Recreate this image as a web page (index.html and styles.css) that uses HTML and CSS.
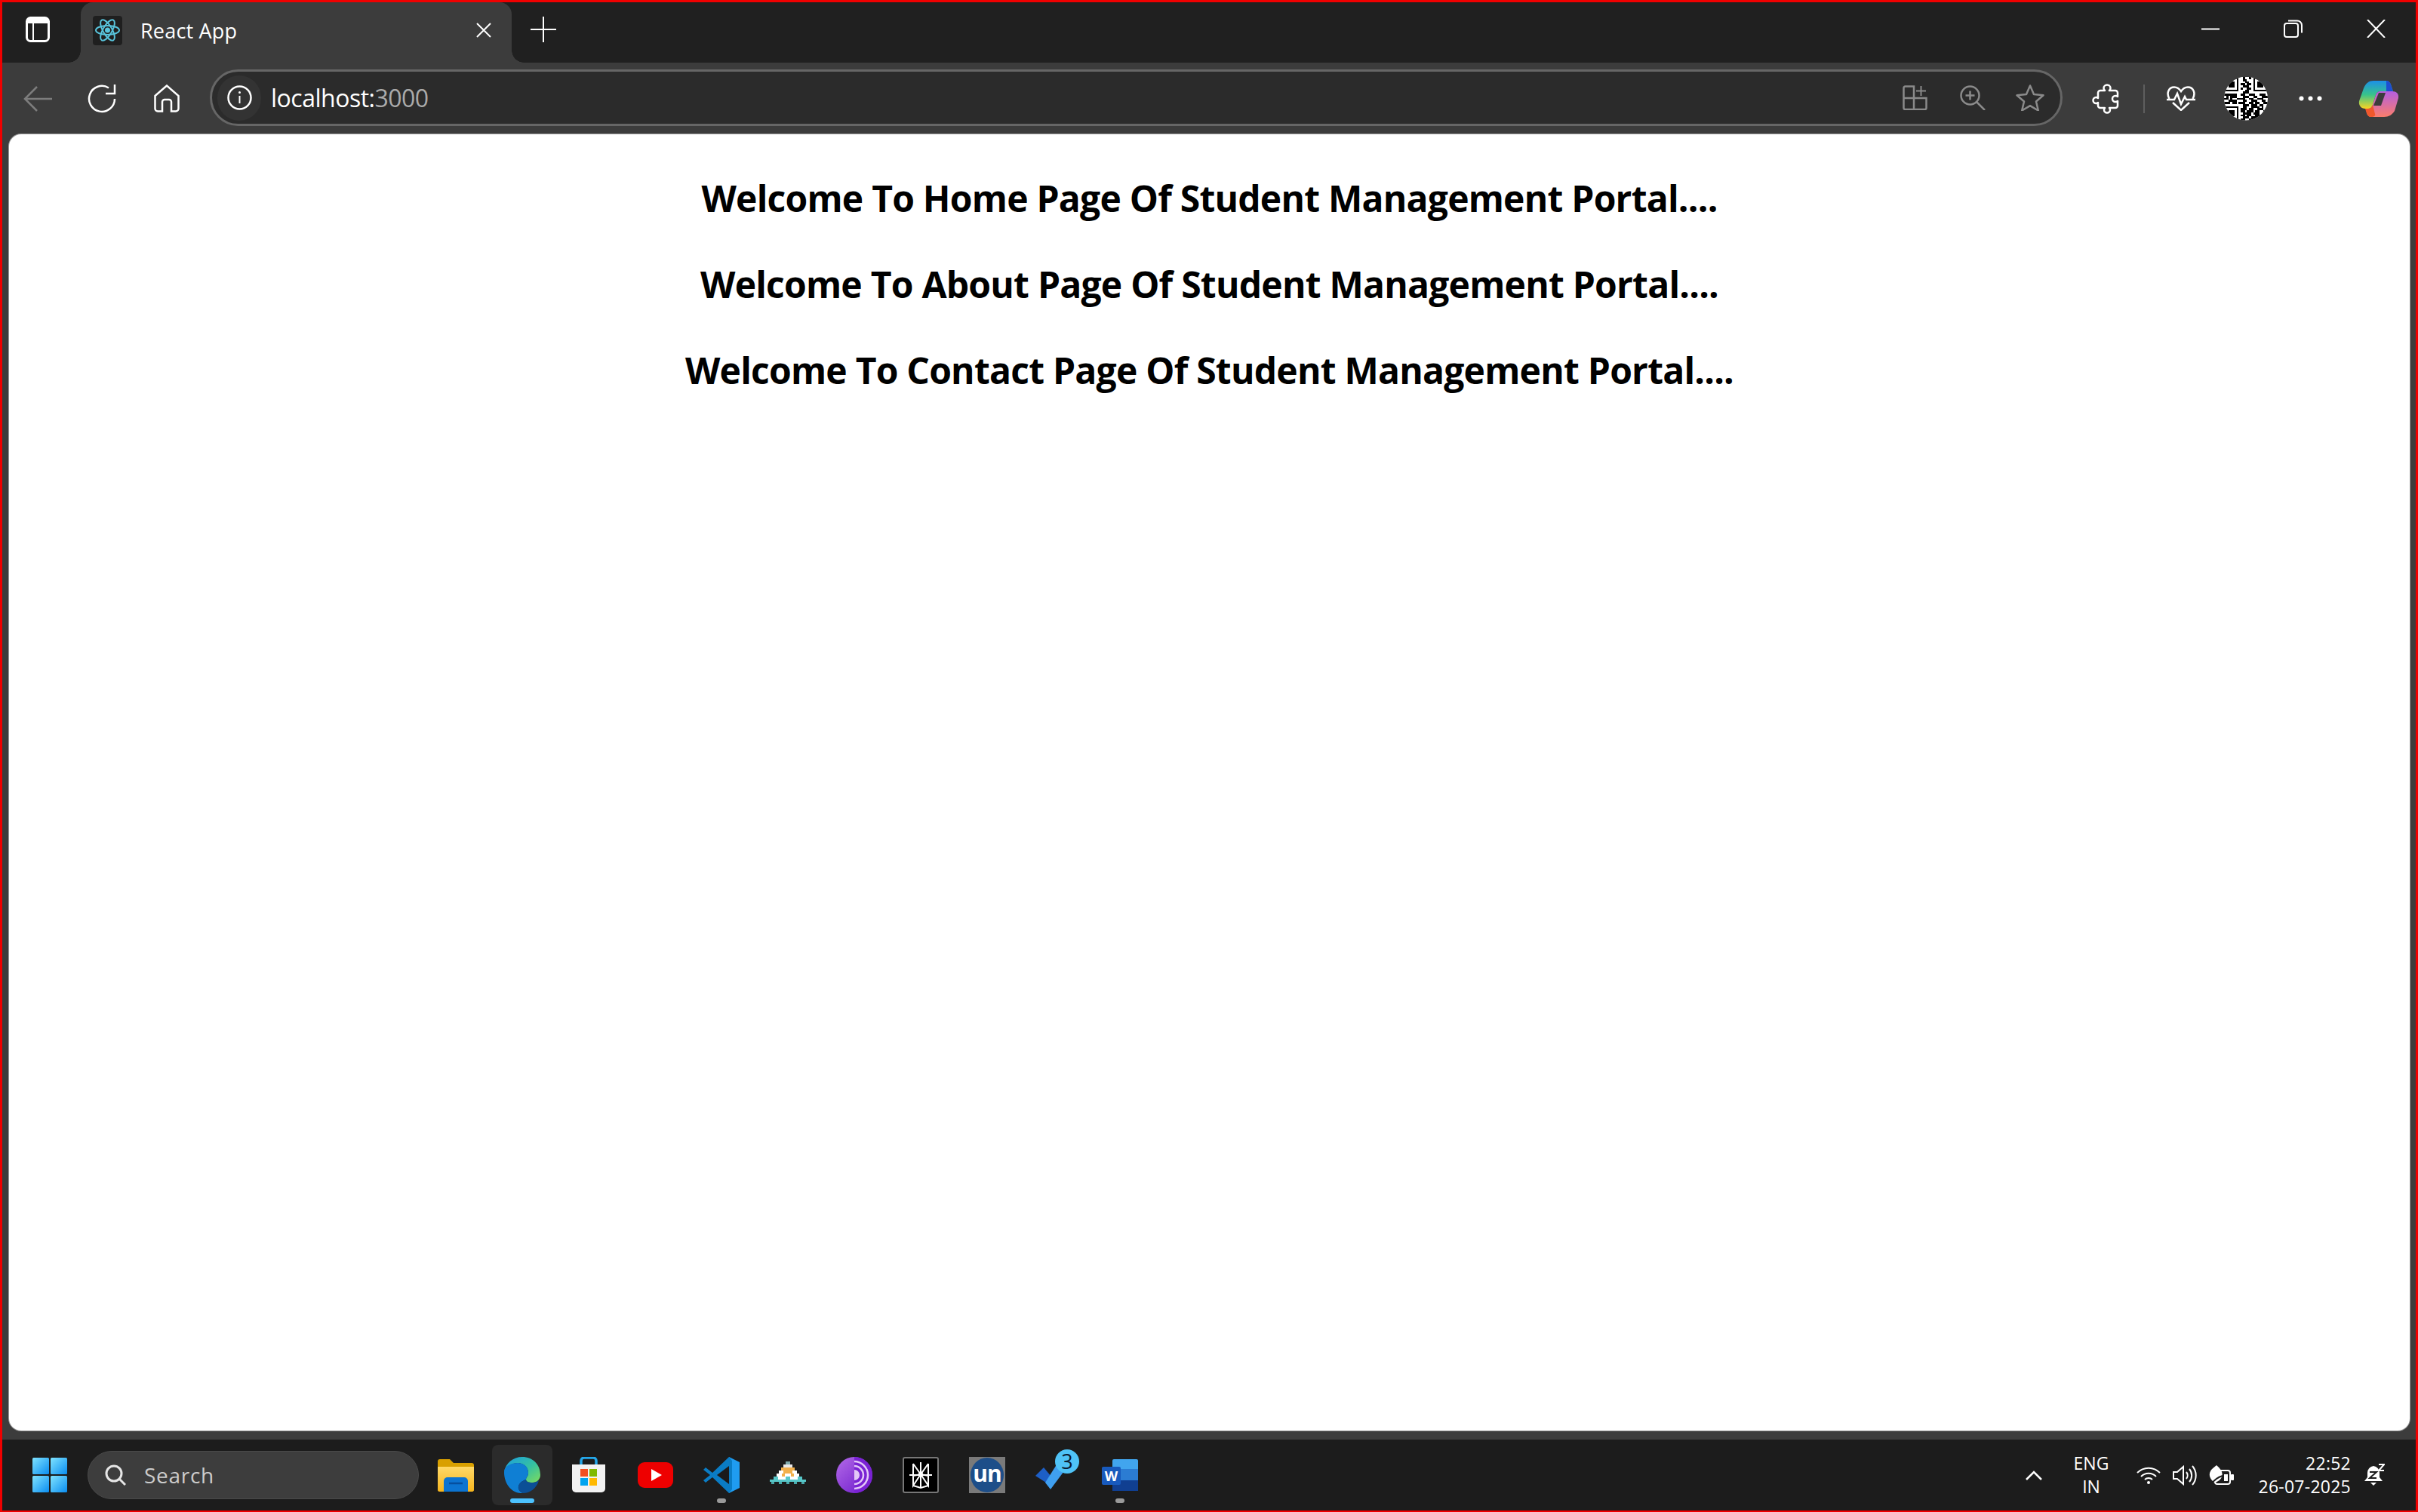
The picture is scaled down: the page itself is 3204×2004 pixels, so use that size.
FILE: index.html
```html
<!DOCTYPE html>
<html lang="en">
<head>
<meta charset="utf-8">
<title>React App</title>
<link rel="stylesheet" href="styles.css">
</head>
<body>
<svg class="defs" width="0" height="0">
  <defs>
    <linearGradient id="winG" x1="0" y1="0" x2="1" y2="1"><stop offset="0" stop-color="#7fe3ff"/><stop offset="1" stop-color="#0a8df0"/></linearGradient>
    <linearGradient id="folderG" x1="0" y1="0" x2="0" y2="1"><stop offset="0" stop-color="#ffd968"/><stop offset="1" stop-color="#f6b51e"/></linearGradient>
    <linearGradient id="edgeG" x1="0" y1="0" x2="1" y2="1"><stop offset="0" stop-color="#1b9de2"/><stop offset=".55" stop-color="#35c1a0"/><stop offset="1" stop-color="#7fdc5c"/></linearGradient>
    <linearGradient id="torG" x1="0" y1="0" x2="1" y2="1"><stop offset="0" stop-color="#b36ae8"/><stop offset="1" stop-color="#6a17c9"/></linearGradient>
    <linearGradient id="copA" x1="0" y1="0" x2="0" y2="1"><stop offset="0" stop-color="#1c8fe8"/><stop offset=".5" stop-color="#38c48a"/><stop offset="1" stop-color="#f9d423"/></linearGradient>
    <linearGradient id="copB" x1="0" y1="0" x2="0" y2="1"><stop offset="0" stop-color="#b45fe0"/><stop offset="1" stop-color="#fb7d6c"/></linearGradient>
  </defs>
</svg>

<header class="strip">
  <svg class="ic side" width="32" height="34" viewBox="0 0 32 34"><rect x="1.500" y="1.500" width="29" height="31" rx="5" fill="none" stroke="#fff" stroke-width="3"/><path d="M1.500 9h29v-2.500a5 5 0 0 0-5-5h-19a5 5 0 0 0-5 5z" fill="#fff"/><path d="M10 9v23" stroke="#fff" stroke-width="2"/></svg>
  <div class="tab">
    <div class="favicon">
      <svg width="33" height="30" viewBox="0 0 33 30" fill="none" stroke="#58c4dc" stroke-width="2"><ellipse cx="16.500" cy="15" rx="15.500" ry="6"/><ellipse cx="16.500" cy="15" rx="15.500" ry="6" transform="rotate(60 16.500 15)"/><ellipse cx="16.500" cy="15" rx="15.500" ry="6" transform="rotate(120 16.500 15)"/><circle cx="16.500" cy="15" r="3.500" fill="#58c4dc" stroke="none"/></svg>
    </div>
    <span class="tab-title">React App</span>
    <svg class="tab-close" width="20" height="20" viewBox="0 0 20 20"><path d="M1 1l18 18M19 1L1 19" stroke="#fff" stroke-width="2"/></svg>
  </div>
  <svg class="ic plus" width="34" height="34" viewBox="0 0 34 34"><path d="M17 0v34M0 17h34" stroke="#fff" stroke-width="2"/></svg>
  <div class="win-controls">
    <svg width="24" height="3" viewBox="0 0 24 3"><path d="M0 1.500h24" stroke="#fff" stroke-width="2"/></svg>
    <svg width="25" height="24" viewBox="0 0 25 24" fill="none" stroke="#fff" stroke-width="2"><rect x="1" y="5" width="18" height="18" rx="3"/><path d="M6 1.500h12a6 6 0 0 1 6 6v10"/></svg>
    <svg width="25" height="24" viewBox="0 0 25 24"><path d="M1 0l23 24M24 0L1 24" stroke="#fff" stroke-width="2"/></svg>
  </div>
</header>

<nav class="toolbar">
  <svg class="back" width="38" height="34" viewBox="0 0 38 34" fill="none" stroke="#7d7d7d" stroke-width="2.500"><path d="M38 17H2M18 1L2 17l16 16"/></svg>
  <svg class="reload" width="38" height="40" viewBox="0 0 38 40" fill="none" stroke="#fff" stroke-width="2.500"><path d="M36 20a17 17 0 1 1-8-14.500"/><path d="M36 1v12H24"/></svg>
  <svg class="home" width="34" height="37" viewBox="0 0 34 37" fill="none" stroke="#fff" stroke-width="2.500"><path d="M1.500 15L17 1.500 32.500 15v17a3.500 3.500 0 0 1-3.500 3.500H23V23a3 3 0 0 0-3-3h-6a3 3 0 0 0-3 3v12.500H5A3.500 3.500 0 0 1 1.500 32z"/></svg>
  <div class="address">
    <div class="info">
      <svg width="33" height="33" viewBox="0 0 33 33" fill="none" stroke="#fff" stroke-width="2.500"><circle cx="16.500" cy="16.500" r="15"/><path d="M16.500 14v10" stroke-width="2"/><circle cx="16.500" cy="9.500" r="1.500" fill="#fff" stroke="none"/></svg>
    </div>
    <div class="url">localhost:<span class="url-port">3000</span></div>
    <svg class="addr-ic" width="33" height="33" viewBox="0 0 33 33" fill="none" stroke="#8a8a8a" stroke-width="2.500"><path d="M1.500 17h30v13a2 2 0 0 1-2 2h-26a2 2 0 0 1-2-2zM1.500 17V3.500a2 2 0 0 1 2-2h11.500V32"/><path d="M24.500 1v13M18 7.500h13" stroke-width="2"/></svg>
    <svg class="addr-ic zoom-ic" width="34" height="33" viewBox="0 0 34 33" fill="none" stroke="#8a8a8a" stroke-width="2.500"><circle cx="13.500" cy="13.500" r="12"/><path d="M22 22l11 11M13.500 7.500v12M7.500 13.500h12"/></svg>
    <svg class="addr-ic star-ic" width="38" height="35" viewBox="0 0 38 35" fill="none" stroke="#8a8a8a" stroke-width="2.500"><path d="M19 1.500l5 11.500 12.500 1.200-9.500 8.300 2.800 12-10.800-6.400-10.800 6.400 2.800-12-9.500-8.300L14 13z" stroke-linejoin="round"/></svg>
  </div>
  <svg class="puzzle" width="35" height="37" viewBox="0 0 35 37" fill="none" stroke="#fff" stroke-width="2.500" stroke-linejoin="round"><path d="M6 11a3 3 0 0 1 3-3h6c-1-1-1.500-2-1.500-3a4.500 4.500 0 0 1 9 0c0 1-.5 2-1.500 3h8a3 3 0 0 1 3 3v5c-1-1-2-1-3-1a4 4 0 0 0 0 8c1 0 2 0 3-1v6a3 3 0 0 1-3 3h-8c.5.700 1 1.500 1 2.500a4 4 0 0 1-8 0c0-1 .5-1.800 1-2.500H9a3 3 0 0 1-3-3v-4c-1 .8-1.500 1-2.500 1a4 4 0 0 1 0-8c1 0 1.500.2 2.500 1z"/></svg>
  <div class="divider"></div>
  <svg class="heart" width="38" height="33" viewBox="0 0 38 33" fill="none" stroke="#fff" stroke-width="2.500"><path d="M3.500 17C-1 9 3 1.500 10 1.500c4 0 7 2.500 9 5.500 2-3 5-5.500 9-5.500 7 0 11 7.500 6.500 15.500"/><path d="M0 18h10l4-8 5 14 5-10 2 4h12"/><path d="M8 22l11 10 11-10"/></svg>
  <svg class="qr" width="58" height="58" viewBox="0 0 21 21" shape-rendering="crispEdges"><rect width="21" height="21" fill="#fff"/><path stroke="#000" d="M0 .5h7M14 .5h7M0 1.500h1m5 0h1M14 1.500h1m5 0h1M0 2.500h1m1 0h3m1 0h1M14 2.500h1m1 0h3m1 0h1M0 3.500h1m1 0h3m1 0h1M14 3.500h1m1 0h3m1 0h1M0 4.500h1m1 0h3m1 0h1M14 4.500h1m1 0h3m1 0h1M0 5.500h1m5 0h1M14 5.500h1m5 0h1M0 6.500h7M14 6.500h7M0 14.500h7M0 15.500h1m5 0h1M0 16.500h1m1 0h3m1 0h1M0 17.500h1m1 0h3m1 0h1M0 18.500h1m1 0h3m1 0h1M0 19.500h1m5 0h1M0 20.500h7M9 .5h1M12 .5h1M9 1.500h2M10 2.500h2M8 3.500h2M11 3.500h2M9 4.500h3M8 5.500h1M11 5.500h2M10 6.500h2M9 7.500h3M0 8.500h6M8 8.500h2M12 8.500h3M17 8.500h3M1 9.500h1M3 9.500h3M9 9.500h3M14 9.500h2M18 9.500h3M0 10.500h2M3 10.500h1M6 10.500h4M12 10.500h2M16 10.500h3M2 11.500h4M9 11.500h2M13 11.500h3M18 11.500h2M0 12.500h3M4 12.500h2M7 12.500h3M12 12.500h2M15 12.500h2M19 12.500h2M9 13.500h3M13 13.500h3M17 13.500h2M9 14.500h2M13 14.500h4M18 14.500h1M8 15.500h3M12 15.500h2M16 15.500h3M8 16.500h2M11 16.500h3M15 16.500h2M19 16.500h2M9 17.500h4M14 17.500h3M8 18.500h2M11 18.500h2M15 18.500h3M9 19.500h3M13 19.500h4M8 20.500h2M12 20.500h3M16 20.500h2"/></svg>
  <svg class="dots" width="31" height="7" viewBox="0 0 31 7" fill="#fff"><circle cx="3.500" cy="3.500" r="3"/><circle cx="15.500" cy="3.500" r="3"/><circle cx="27.500" cy="3.500" r="3"/></svg>
  <svg class="copilot" width="54" height="50" viewBox="0 0 54 50"><path d="M20 1h17c3 0 5 2 6 5l3 9H30c-4 0-6 2-7 5l-4 13c-1 3-3 5-6 5H9c-5 0-9-4-8-10l6-17C10 4 14 1 20 1z" fill="url(#copA)"/><path d="M37 1c3 0 5 2 6 5l3 9H37z" fill="#1d4fd1"/><path d="M34 49H17c-3 0-5-2-6-5l-1-6h3c3 0 5-2 6-5l4-13c1-3 3-5 7-5h15c5 0 9 3 8 9l-5 17c-3 5-8 8-14 8z" fill="url(#copB)"/><path d="M17 49c-3 0-5-2-6-5l-2-6h4c3 0 5-2 6-5l3 12c1 2-1 4-5 4z" fill="#f0582c"/><path d="M27 17h9l-6 17h-10z" fill="#3c3c3c"/></svg>
</nav>

<main class="page">
  <h1 class="greet">Welcome To Home Page Of Student Management Portal....</h1>
  <h1 class="greet">Welcome To About Page Of Student Management Portal....</h1>
  <h1 class="greet">Welcome To Contact Page Of Student Management Portal....</h1>
</main>

<footer class="taskbar">
  <svg class="start" width="46" height="46" viewBox="0 0 46 46" fill="url(#winG)"><rect width="22" height="22" rx="1.500"/><rect x="24" width="22" height="22" rx="1.500"/><rect y="24" width="22" height="22" rx="1.500"/><rect x="24" y="24" width="22" height="22" rx="1.500"/></svg>
  <div class="search">
    <svg width="28" height="28" viewBox="0 0 28 28" fill="none" stroke="#e6e6e6" stroke-width="3"><circle cx="12" cy="12" r="10"/><path d="M19 19l8 8"/></svg>
    <span class="search-text">Search</span>
  </div>
  <div class="apps">
    <div class="app"><svg width="48" height="44" viewBox="0 0 48 44"><path d="M0 4a3 3 0 0 1 3-3h13l5 5h24a3 3 0 0 1 3 3v32a3 3 0 0 1-3 3H3a3 3 0 0 1-3-3z" fill="#d9a000"/><path d="M0 11h48v30a3 3 0 0 1-3 3H3a3 3 0 0 1-3-3z" fill="url(#folderG)"/><path d="M8 44V30a5 5 0 0 1 5-5h22a5 5 0 0 1 5 5v14z" fill="#0c74d1"/><path d="M15 33h18" stroke="#064f9e" stroke-width="2.500"/></svg></div>
    <div class="app app-active"><svg width="48" height="48" viewBox="0 0 48 48"><path d="M24 0C38 0 48 10 48 24c0 6-5 10-10 10-3 0-9 0-9-4 0-3 3-4 3-9 0-8-7-13-14-13C10 8 3 13 0 20 2 8 12 0 24 0z" fill="url(#edgeG)"/><path d="M0 20C0 12 9 8 18 8c8 0 14 5 14 13 0 5-3 6-3 9-6 2-11 6-10 12 1 3 3 5 6 6C11 49 0 37 0 20z" fill="#0f7fd4"/><path d="M29 30c0 4 6 4 9 4 3 0 6-1 8-3-3 11-12 17-21 17-3-1-5-3-6-6-1-6 4-10 10-12z" fill="#0b4f96"/></svg><i class="mark mark-blue"></i></div>
    <div class="app"><svg width="46" height="48" viewBox="0 0 46 48"><path d="M13 10V5a4 4 0 0 1 4-4h12a4 4 0 0 1 4 4v5" fill="none" stroke="#24a6e8" stroke-width="3.500"/><path d="M1 10h44v32a5 5 0 0 1-5 5H6a5 5 0 0 1-5-5z" fill="#f2f2f2"/><rect x="12" y="16" width="10" height="10" fill="#f25022"/><rect x="24" y="16" width="10" height="10" fill="#7fba00"/><rect x="12" y="28" width="10" height="10" fill="#00a4ef"/><rect x="24" y="28" width="10" height="10" fill="#ffb900"/></svg></div>
    <div class="app"><svg width="47" height="34" viewBox="0 0 47 34"><rect width="47" height="34" rx="9" fill="#ee0000"/><path d="M18 9l14 8-14 8z" fill="#fff"/></svg></div>
    <div class="app"><svg width="48" height="48" viewBox="0 0 48 48"><path d="M34 0l14 7v34l-14 7z" fill="#1f9cf0"/><path d="M34 0L12 21 3 14l-3 3 9 7-9 7 3 3 9-7 22 21 4-5V5z" fill="#0a7cc4"/><path d="M34 12v24L18 24z" fill="#1a1a1a"/></svg><i class="mark"></i></div>
    <div class="app"><svg class="triangle" width="48" height="30" viewBox="0 0 48 30" shape-rendering="crispEdges"><path d="M21 0h6v4h-6z" fill="#7fa9ab"/><path d="M18 4h12v4H18z" fill="#e9e9e9"/><path d="M15 8h18v4H15z" fill="#f2b04c"/><path d="M12 12h6v4h-6zM30 12h6v4h-6z" fill="#fff"/><path d="M18 12h12v4H18z" fill="#f2b04c"/><path d="M9 16h30v4H9z" fill="#fff"/><path d="M16 16h4v4h-4zM28 16h4v4h-4z" fill="#f2b04c"/><path d="M5 20h38v4H5z" fill="#fff"/><path d="M5 20h6v4H5zM37 20h6v4h-6zM21 20h6v4h-6z" fill="#57c7c9"/><path d="M0 24h48v3H0z" fill="#57c7c9"/><path d="M2 27h4v3H2zM12 27h4v3h-4zM22 27h4v3h-4zM32 27h4v3h-4zM42 27h4v3h-4z" fill="#4aa9ab"/></svg></div>
    <div class="app"><svg width="48" height="48" viewBox="0 0 48 48"><circle cx="24" cy="24" r="24" fill="url(#torG)"/><path d="M24 0a24 24 0 0 1 0 48z" fill="#7a22d4"/><path d="M24 6a18 18 0 0 1 0 36M24 12a12 12 0 0 1 0 24" fill="none" stroke="#e3c8f7" stroke-width="2.500"/><path d="M24 17a7 7 0 0 1 0 14z" fill="#e3c8f7"/></svg></div>
    <div class="app"><svg width="48" height="48" viewBox="0 0 48 48"><rect x="1" y="1" width="46" height="46" rx="2" fill="#000" stroke="#777" stroke-width="2"/><path d="M24 7v34M14 9l10 14L34 9M14 9v16l10-2 10 2V9M14 25v13l10-15 10 15V25M9 24h30M14 38l10 3 10-3" fill="none" stroke="#fff" stroke-width="2"/><circle cx="24" cy="23" r="3" fill="#fff"/></svg></div>
    <div class="app"><div class="un"><span class="un-text">un</span></div></div>
    <div class="app"><svg class="todo" width="58" height="54" viewBox="0 0 58 54"><path d="M0 35l11-11 10 12-7 8z" fill="#1d5fc7"/><path d="M13 44l7 9 26-35-14-4z" fill="#3f9ff0"/><circle cx="42" cy="16" r="16" fill="#4fc3f7"/><text class="todo-num" x="42" y="26" text-anchor="middle">3</text></svg></div>
    <div class="app"><svg width="48" height="42" viewBox="0 0 48 42"><path d="M14 2a2 2 0 0 1 2-2h30a2 2 0 0 1 2 2v11H14z" fill="#41a5ee"/><rect x="14" y="13" width="34" height="15" fill="#2b7cd3"/><rect x="14" y="28" width="34" height="14" fill="#103f91"/><rect x="0" y="10" width="25" height="24" rx="2" fill="#185abd"/><text class="word-w" x="12.500" y="29" text-anchor="middle">W</text></svg><i class="mark"></i></div>
  </div>
  <div class="tray">
    <svg width="22" height="13" viewBox="0 0 22 13" fill="none" stroke="#fff" stroke-width="2.500"><path d="M1 12L11 2l10 10"/></svg>
    <div class="lang"><div>ENG</div><div>IN</div></div>
    <svg class="wifi" width="32" height="24" viewBox="0 0 32 24" fill="none" stroke="#fff" stroke-width="2"><path d="M1 9a21 21 0 0 1 30 0M6 14a14 14 0 0 1 20 0M11 18a7 7 0 0 1 10 0"/><circle cx="16" cy="22" r="2" fill="#fff" stroke="none"/></svg>
    <svg class="sound" width="32" height="27" viewBox="0 0 32 27" fill="none" stroke="#fff" stroke-width="2"><path d="M1 9h5l8-7v23l-8-7H1z"/><path d="M18 9a7 7 0 0 1 0 9M22 5a13 13 0 0 1 0 17M26 1a19 19 0 0 1 0 25"/></svg>
    <svg class="battery" width="33" height="27" viewBox="0 0 33 27"><rect x="8" y="7" width="20" height="18" rx="3" fill="#1c1c1c" stroke="#fff" stroke-width="2"/><rect x="20" y="12" width="5" height="9" fill="#fff"/><rect x="29" y="12" width="4" height="8" rx="1" fill="#fff"/><path d="M10 0C16 5 19 10 17 15 16 19 12 22 7 23 2 19-1 13 2 8 3 5 7 3 10 0z" fill="#fff"/><path d="M4 24C8 18 12 16 18 14" stroke="#1c1c1c" stroke-width="2" fill="none"/></svg>
    <div class="clock"><div>22:52</div><div>26-07-2025</div></div>
    <svg class="bell" width="27" height="30" viewBox="0 0 27 30"><path d="M12 3a9 9 0 0 0-8 9v6l-4 5h24l-4-5v-6a9 9 0 0 0-8-9z" fill="#fff"/><path d="M8 25h8l-4 4z" fill="#fff"/><path d="M7 11h9l-9 8h9" fill="none" stroke="#1c1c1c" stroke-width="2"/><path d="M19 1h7l-7 8h7" fill="none" stroke="#fff" stroke-width="2"/></svg>
  </div>
</footer>
</body>
</html>
```

FILE: styles.css
```css
* { box-sizing: border-box; }
html, body { margin: 0; padding: 0; }
body {
  width: 3204px;
  height: 2004px;
  overflow: hidden;
  display: flex;
  flex-direction: column;
  background: #3c3c3c;
  border: solid #f00000;
  border-width: 3px 3px 2px 3px;
  font-family: "Open Sans", "Noto Sans", sans-serif;
  color: #fff;
}
svg { display: block; flex: none; }
.defs { position: absolute; }

/* tab strip */
.strip {
  height: 80px;
  flex: none;
  display: flex;
  align-items: center;
  background: #202020;
}
.side { margin: 0 0 8px 31px; }
.tab {
  position: relative;
  align-self: stretch;
  width: 571px;
  margin-left: 41px;
  padding: 0 27px 6px 16px;
  display: flex;
  align-items: center;
  background: #3c3c3c;
  border-radius: 16px 16px 0 0;
}
.tab::before, .tab::after {
  content: "";
  position: absolute;
  bottom: 0;
  width: 16px;
  height: 16px;
  background: radial-gradient(circle at 0 0, #202020 15.500px, #3c3c3c 16px);
}
.tab::before { left: -16px; }
.tab::after { right: -16px; background: radial-gradient(circle at 100% 0, #202020 15.500px, #3c3c3c 16px); }
.favicon {
  width: 39px;
  height: 39px;
  border-radius: 4px;
  background: #1f1f1f;
  display: flex;
  align-items: center;
  justify-content: center;
}
.tab-title { margin-left: 24px; font-size: 27px; letter-spacing: .2px; }
.tab-close { margin-left: auto; }
.plus { margin: 0 0 8px 25px; }
.win-controls {
  margin-left: auto;
  padding: 0 40px 10px 0;
  display: flex;
  align-items: center;
  gap: 85px;
}

/* toolbar */
.toolbar {
  height: 95px;
  flex: none;
  display: flex;
  align-items: center;
  background: #3c3c3c;
}
.back { margin-left: 28px; }
.reload { margin-left: 47px; }
.home { margin-left: 50px; }
.address {
  width: 2455px;
  height: 75px;
  margin: 0 0 2px 40px;
  padding: 0 21px 0 7px;
  display: flex;
  align-items: center;
  background: #2b2b2b;
  border: 3px solid #666;
  border-radius: 38px;
}
.info {
  width: 58px;
  height: 60px;
  border-radius: 30px;
  background: #333;
  display: flex;
  align-items: center;
  justify-content: center;
}
.url { margin-left: 13px; font-size: 32px; letter-spacing: -.5px; }
.url-port { color: #aaa; }
.addr-ic { margin-left: auto; }
.zoom-ic { margin-left: 43px; }
.star-ic { margin-left: 40px; }
.puzzle { margin-left: 41px; overflow: visible; }
.divider { width: 2px; height: 38px; margin-left: 31px; background: #5e5e5e; }
.heart { margin-left: 29px; }
.qr { margin-left: 38px; clip-path: ellipse(50% 50%); }
.qr path { stroke-width: 1; }
.dots { margin-left: 41px; }
.copilot { margin-left: 48px; }

/* page */
.page {
  flex: 1;
  margin: 0 8px 12px 9px;
  padding-top: 46px;
  background: #fff;
  border-radius: 16px;
  box-shadow: 0 0 0 1px #9a9a9a;
  color: #000;
  text-align: center;
}
.greet {
  margin: 0 0 36px;
  font-size: 48px;
  line-height: 78px;
  font-weight: 700;
  letter-spacing: -.76px;
}

/* taskbar */
.taskbar {
  height: 94px;
  flex: none;
  display: flex;
  align-items: center;
  background: #1c1c1c;
}
.start { margin-left: 40px; }
.search {
  width: 439px;
  height: 64px;
  margin-left: 27px;
  padding-left: 22px;
  display: flex;
  align-items: center;
  gap: 24px;
  background: #3d3d3d;
  border: 1px solid #4a4a4a;
  border-radius: 32px;
}
.search-text { font-size: 28px; letter-spacing: .7px; color: #ccc; }
.apps { margin-left: 9px; display: flex; gap: 8px; }
.app {
  position: relative;
  width: 80px;
  height: 80px;
  display: flex;
  align-items: center;
  justify-content: center;
  border-radius: 8px;
}
.app-active { background: #2b2b2b; }
.mark {
  position: absolute;
  left: 34px;
  bottom: 3px;
  width: 12px;
  height: 6px;
  border-radius: 3px;
  background: #9a9a9a;
}
.mark-blue { left: 24px; width: 32px; background: #4cc2ff; }
.un {
  width: 48px;
  height: 48px;
  background: #7a7a7a;
  display: flex;
  align-items: center;
  justify-content: center;
}
.un-text {
  width: 44px;
  height: 46px;
  border-radius: 50%;
  background: #1d4e89;
  color: #fff;
  font: 700 30px/42px "Open Sans", sans-serif;
  text-align: center;
  letter-spacing: -1px;
}
.triangle { margin-bottom: 6px; }
.todo { align-self: flex-start; margin: 6px 0 0 10px; overflow: visible; }
.todo-num { font: 400 27px "Open Sans", sans-serif; fill: #0b1c33; }
.word-w { font: 700 18px "Open Sans", sans-serif; fill: #fff; }

/* tray */
.tray {
  margin-left: auto;
  padding-right: 41px;
  display: flex;
  align-items: center;
  font-size: 23px;
  line-height: 31px;
  color: #fff;
}
.lang { width: 80px; margin-left: 25px; text-align: center; }
.wifi { margin-left: 20px; }
.sound { margin-left: 16px; }
.battery { margin-left: 16px; }
.clock { width: 155px; text-align: right; letter-spacing: .25px; }
.bell { margin-left: 18px; }
```
